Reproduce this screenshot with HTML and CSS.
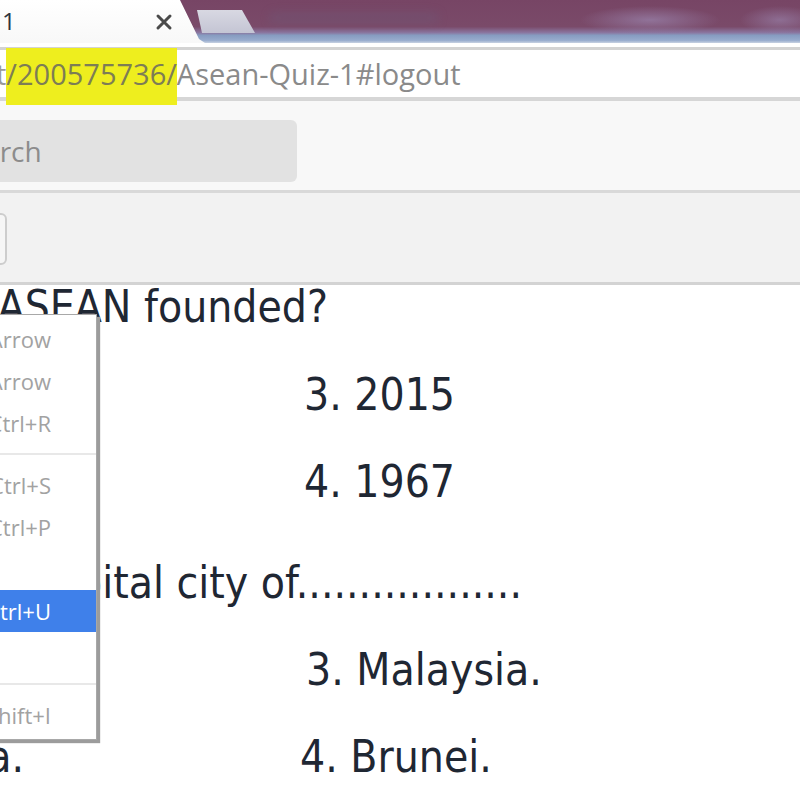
FILE: index.html
```html
<!DOCTYPE html>
<html>
<head>
<meta charset="utf-8">
<link rel="stylesheet" href="styles.css">
</head>
<body>
<div class="browser">
  <div class="tabstrip">
    <div class="tab-active">
      <span class="tab-title">1</span>
      <svg class="tab-close" width="18" height="18" viewBox="0 0 18 18"><path d="M3 3 L15 15 M15 3 L3 15" stroke="#4a4a4a" stroke-width="3" stroke-linecap="round"/></svg>
    </div>
    <div class="tab-new"></div>
    <div class="title-blur"></div>
  </div>
  <div class="omnibox">
    <div class="url-field">
      <span class="url"><span class="url-pre">t</span><span class="hl">/200575736/</span>Asean-Quiz-1#logout</span>
    </div>
  </div>
  <div class="toolbar">
    <div class="search">Search</div>
  </div>
  <div class="toolbar2">
    <div class="tb-btn"></div>
  </div>
  <main class="page">
    <div class="q q1"><span>1. When was ASEAN founded?</span></div>
    <div class="opt-row first">
      <div class="opt-left"><span>1. 1945</span></div>
      <div class="opt-right">3. 2015</div>
    </div>
    <div class="opt-row">
      <div class="opt-left"><span>2. 1976</span></div>
      <div class="opt-right">4. 1967</div>
    </div>
    <div class="q q2"><span>2. Jakarta is the capital city of..................</span></div>
    <div class="opt-row">
      <div class="opt-left"><span>1. Thailand.</span></div>
      <div class="opt-right shift-r">3. Malaysia.</div>
    </div>
    <div class="opt-row">
      <div class="opt-left"><span>2. Indonesia.</span></div>
      <div class="opt-right shift-l">4. Brunei.</div>
    </div>
  </main>
  <div class="menu">
    <div class="mi"><span class="ms">Alt+Left Arrow</span></div>
    <div class="mi"><span class="ms">Alt+Right Arrow</span></div>
    <div class="mi"><span class="ms">Ctrl+R</span></div>
    <div class="msep"></div>
    <div class="mi"><span class="ms">Ctrl+S</span></div>
    <div class="mi"><span class="ms">Ctrl+P</span></div>
    <div class="mi"></div>
    <div class="mi active"><span class="ms">Ctrl+U</span></div>
    <div class="mi"></div>
    <div class="msep"></div>
    <div class="mi"><span class="ms">Ctrl+Shift+I</span></div>
  </div>
</div>
</body>
</html>
```
FILE: styles.css
```css
html, body {
  margin: 0;
  padding: 0;
  background: #ffffff;
  overflow: hidden;
}

.browser {
  position: relative;
  width: 800px;
  height: 800px;
  overflow: hidden;
}

/* ---------- tab strip ---------- */
.tabstrip {
  height: 43px;
  display: flex;
  align-items: flex-start;
  background:
    radial-gradient(ellipse 70px 14px at 650px 20px, rgba(150,125,165,0.8), rgba(150,125,165,0)),
    radial-gradient(ellipse 40px 14px at 780px 20px, rgba(150,125,165,0.7), rgba(150,125,165,0)),
    linear-gradient(to bottom, #774565 0, #7a4a69 62%, #8a76a0 76%, #869bc0 82%, #98acce 94%, #c8d2e2 100%);
}

.tab-active {
  width: 205px;
  height: 43px;
  flex: none;
  display: flex;
  align-items: flex-start;
  background: linear-gradient(to bottom, #ffffff, #f8f8f8);
  clip-path: polygon(0 0, 180px 0, 199px 39px, 205px 43px, 0 43px);
}

.tab-title {
  font-family: "Open Sans", "Noto Sans", sans-serif;
  font-size: 24px;
  line-height: 30px;
  color: #2c3442;
  margin-top: 6px;
  padding-left: 2px;
}

.tab-close {
  margin-left: auto;
  margin-right: 32px;
  margin-top: 13px;
}

.tab-new {
  width: 58px;
  height: 23px;
  margin-left: -8px;
  margin-top: 10px;
  flex: none;
  background: linear-gradient(to bottom, #d8d8e2, #c4c5d4);
  clip-path: polygon(0 0, 45px 0, 58px 100%, 5px 100%);
}

.title-blur {
  width: 170px;
  height: 12px;
  margin-top: 12px;
  margin-left: 14px;
  border-radius: 6px;
  background: rgba(110, 90, 120, 0.35);
  filter: blur(4px);
}

/* ---------- omnibox ---------- */
.omnibox {
  background: #ffffff;
  padding-top: 4px;
}

.url-field {
  height: 47px;
  border-top: 3px solid #d3d3d3;
  border-bottom: 4px solid #d6d6d6;
  display: flex;
  align-items: center;
}

.url {
  font-family: "Open Sans", "Noto Sans", sans-serif;
  font-size: 29px;
  color: #8a8a8a;
  white-space: nowrap;
}

.url-pre {
  margin-left: -4px;
  color: #9a9a9a;
}

.hl {
  background: #eeee1e;
  color: #7d7d55;
  padding: 6px 0 12px;
}

/* ---------- toolbars ---------- */
.toolbar {
  background: #f8f8f8;
  padding: 19px 0 8px;
  border-bottom: 3px solid #d9d9d9;
}

.search {
  margin-left: -47px;
  width: 344px;
  height: 62px;
  border-radius: 6px;
  background: #e2e2e2;
  font-family: "Open Sans", "Noto Sans", sans-serif;
  font-size: 28px;
  line-height: 62px;
  color: #8c8c8c;
}

.toolbar2 {
  background: #f2f2f2;
  padding: 20px 0 17px;
  border-bottom: 3px solid #d3d3d3;
}

.tb-btn {
  margin-left: -40px;
  width: 43px;
  height: 48px;
  border: 2px solid #cdcdcd;
  border-radius: 6px;
  background: #f6f6f6;
}

/* ---------- page ---------- */
.page {
  padding-top: 2px;
  font-family: "DejaVu Sans Condensed", "DejaVu Sans", sans-serif;
  font-stretch: condensed;
  font-size: 44px;
  color: #1f2733;
}

.q {
  display: flex;
  justify-content: flex-end;
  white-space: nowrap;
}

.q1 {
  width: 328px;
  line-height: 40px;
}

.q2 {
  width: 522px;
  line-height: 87px;
  margin-top: 14px;
}

.opt-row {
  display: flex;
  line-height: 87px;
  white-space: nowrap;
}

.opt-row.first {
  margin-top: 24px;
}

.opt-left {
  width: 24px;
  flex: none;
  display: flex;
  justify-content: flex-end;
}

.opt-right {
  margin-left: 280px;
}

.opt-right.shift-r {
  margin-left: 282px;
}

.opt-right.shift-l {
  margin-left: 276px;
}

/* ---------- context menu ---------- */
.menu {
  position: absolute;
  left: -300px;
  top: 314px;
  width: 395px;
  padding: 3px 0;
  background: #ffffff;
  border: 1px solid #a8a8a8;
  box-shadow: 3px 3px 1px #9c9c9c;
  font-family: "Open Sans", "Noto Sans", sans-serif;
  font-size: 22px;
}

.mi {
  height: 42px;
  display: flex;
  align-items: center;
  justify-content: flex-end;
  padding: 0 45px 0 30px;
  white-space: nowrap;
}

.ms {
  color: #a2a2a2;
}

.mi.active {
  background: #3f80ea;
}

.mi.active .ms {
  color: #ffffff;
}

.msep {
  height: 20px;
  display: flex;
  align-items: center;
}

.msep::before {
  content: "";
  display: block;
  width: 100%;
  height: 2px;
  background: #e8e8e8;
}
```
